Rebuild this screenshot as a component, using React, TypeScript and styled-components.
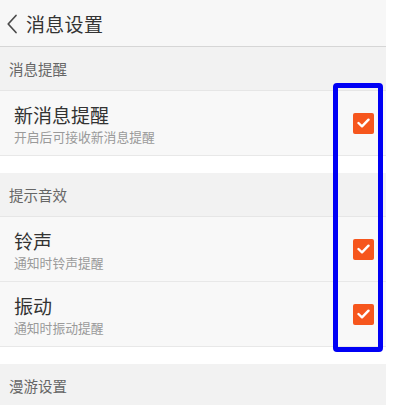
import styled, { createGlobalStyle } from 'styled-components';

const GlobalStyle = createGlobalStyle`
  html, body {
    margin: 0;
    padding: 0;
    background: #ffffff;
  }
  body {
    font-family: "Noto Sans CJK SC", "Noto Sans", sans-serif;
  }
`;

type Item = { title: string; desc: string; checked: boolean };
type Group = { label: string; items: Item[] };

const groups: Group[] = [
  {
    label: '消息提醒',
    items: [{ title: '新消息提醒', desc: '开启后可接收新消息提醒', checked: true }],
  },
  {
    label: '提示音效',
    items: [
      { title: '铃声', desc: '通知时铃声提醒', checked: true },
      { title: '振动', desc: '通知时振动提醒', checked: true },
    ],
  },
  { label: '漫游设置', items: [] },
];

const App = () => {
  return (
    <Page>
      <GlobalStyle />
      <Header>
        <BackIcon viewBox="0 0 12 20">
          <path d="M10 1.5 L2.2 10 L10 18.5" fill="none" stroke="#4a4a4a" strokeWidth="1.7" strokeLinecap="round" strokeLinejoin="round" />
        </BackIcon>
        <Title>消息设置</Title>
      </Header>
      {groups.map((g, i) => (
        <Section key={g.label} $gap={i === 2}>
          <SectionLabel>{g.label}</SectionLabel>
          {g.items.map((it) => (
            <Row key={it.title}>
              <RowText>
                <RowTitle>{it.title}</RowTitle>
                <RowDesc>{it.desc}</RowDesc>
              </RowText>
              <Check $checked={it.checked}>
                <svg width="13" height="10" viewBox="0 0 13 10">
                  <path d="M1.5 5 L5 8.3 L11.5 1.7" fill="none" stroke="#fff" strokeWidth="2.4" strokeLinecap="round" strokeLinejoin="round" />
                </svg>
              </Check>
            </Row>
          ))}
          {i === 0 && <Spacer />}
        </Section>
      ))}
      <Highlight />
    </Page>
  );
};

export default App;

const Page = styled.div`
  position: relative;
  width: 386px;
  height: 405px;
  overflow: hidden;
`;

const Header = styled.div`
  display: flex;
  align-items: center;
  gap: 8px;
  height: 47px;
  padding-left: 6px;
  background: #f7f7f7;
  border-bottom: 1px solid #d6d6d6;
  box-sizing: border-box;
`;

const BackIcon = styled.svg`
  width: 12px;
  height: 20px;
  margin-top: 1px;
`;

const Title = styled.div`
  font-size: 19px;
  color: #333;
  letter-spacing: 0.3px;
`;

const Section = styled.div<{ $gap: boolean }>`
  margin-top: ${(p) => (p.$gap ? '17px' : '0')};
`;

const Spacer = styled.div`
  height: 17px;
  background: #ffffff;
`;

const SectionLabel = styled.div`
  height: 44px;
  display: flex;
  align-items: center;
  padding-left: 9px;
  font-size: 14.5px;
  color: #666;
  background: #f2f2f2;
  border-bottom: 1px solid #e6e6e6;
  box-sizing: border-box;
`;

const Row = styled.div`
  display: flex;
  align-items: center;
  justify-content: space-between;
  height: 65px;
  padding: 0 12px 0 14px;
  background: #f8f8f8;
  border-bottom: 1px solid #e8e8e8;
  box-sizing: border-box;
`;

const RowText = styled.div`
  display: flex;
  flex-direction: column;
  margin-top: 2px;
`;

const RowTitle = styled.div`
  font-size: 19px;
  line-height: 24px;
  color: #333;
`;

const RowDesc = styled.div`
  font-size: 12.8px;
  line-height: 18px;
  margin-top: 1px;
  color: #9a9a9a;
`;

const Check = styled.div<{ $checked: boolean }>`
  width: 21px;
  height: 21px;
  border-radius: 2px;
  background: ${(p) => (p.$checked ? '#f6561d' : '#fff')};
  display: flex;
  align-items: center;
  justify-content: center;
`;

const Highlight = styled.div`
  position: absolute;
  left: 333px;
  top: 83px;
  width: 50px;
  height: 269px;
  border: 5px solid #0000f5;
  border-radius: 4px;
  box-sizing: border-box;
`;
